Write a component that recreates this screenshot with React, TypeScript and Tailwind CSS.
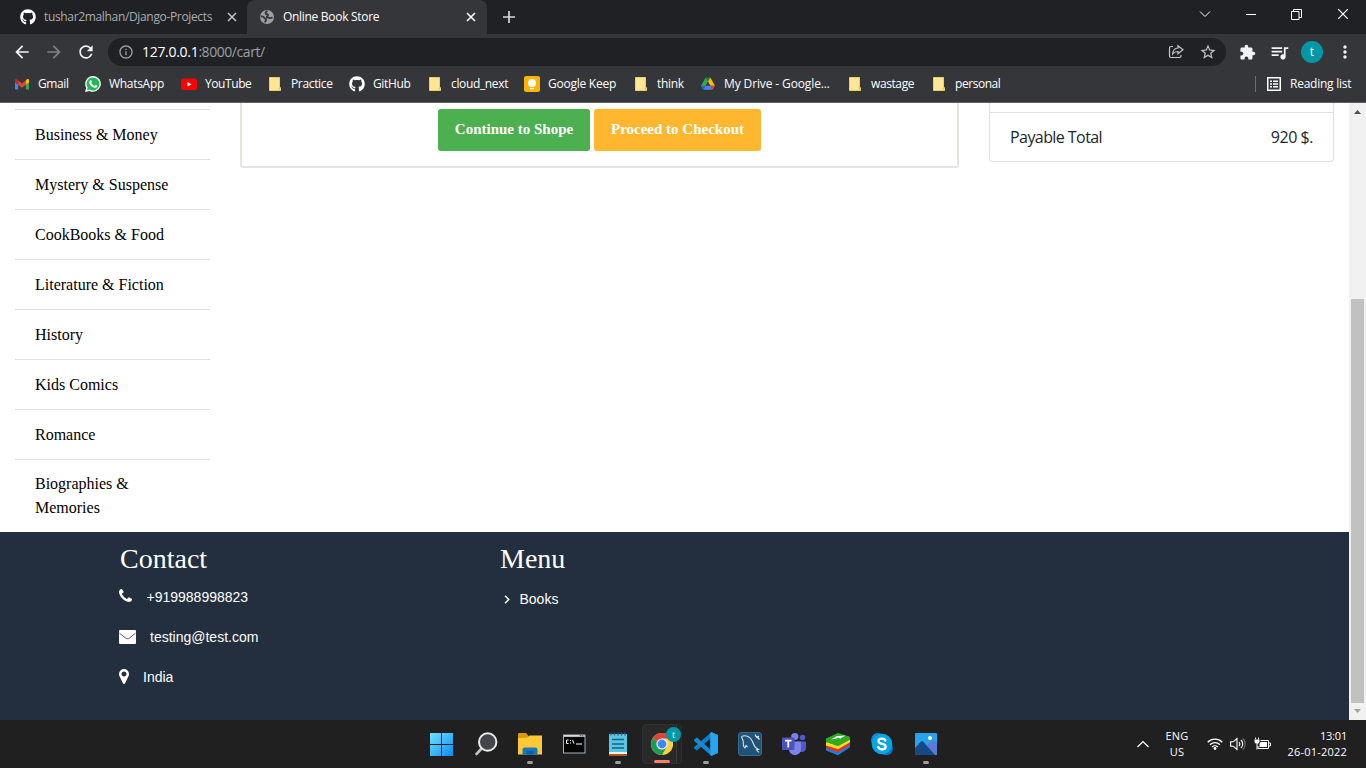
import type { ReactNode } from "react";
import { FaGithub } from "react-icons/fa";
import {
  MdArrowBack,
  MdArrowForward,
  MdExtension,
  MdInfoOutline,
  MdMoreVert,
  MdQueueMusic,
  MdRefresh,
  MdStarBorder,
} from "react-icons/md";

function Cross({ className }: { className: string }) {
  return (
    <svg className={className} viewBox="0 0 10 10" fill="none" stroke="currentColor">
      <path d="M1 1l8 8M9 1l-8 8" />
    </svg>
  );
}

function GlobeIcon() {
  return (
    <svg className="size-4" viewBox="0 0 16 16">
      <circle cx="8" cy="8" r="7" fill="#9aa0a6" />
      <path
        d="M8.500 2.200c-1.500.5-2.500 1.600-1.700 2.500.8.700 1.900.2 2.300 1.200.3 1-1.400 1-1.300 2 .1.900 1.600.5 2.400.9.900.5 2.200.2 3.300-.5M1.800 7.500c1.700-.3 3 .3 3.500 1.300.4.900 1.900.7 1.900 1.900 0 1-1.100 1.500-1.300 2.700"
        fill="none"
        stroke="#35363a"
        strokeWidth="1.900"
      />
    </svg>
  );
}

function TabStrip() {
  return (
    <div className="flex h-[34px] bg-[#202124] text-xs tracking-[-0.3px]">
      <div className="flex w-[247px] items-center pl-5">
        <FaGithub className="size-4 shrink-0 text-white" />
        <span className="ml-2 w-[176px] whitespace-nowrap tracking-[-0.34px] text-[#a9adb2]">
          tushar2malhan/Django-Projects
        </span>
        <Cross className="ml-[7px] size-[10px] stroke-[1.5] text-[#c4c7ca]" />
      </div>
      <div className="flex w-60 items-center rounded-t-lg bg-[#35363a] pl-3 text-white">
        <GlobeIcon />
        <span className="ml-2 w-[183px] whitespace-nowrap">Online Book Store</span>
        <Cross className="size-[10px] stroke-[1.6] text-white" />
      </div>
      <div className="flex flex-1 items-center pl-4 text-[#d5d6d8]">
        <svg className="size-3" viewBox="0 0 12 12" fill="none" stroke="currentColor" strokeWidth="1.7">
          <path d="M6 0v12M0 6h12" />
        </svg>
      </div>
      <div className="flex w-[167px] items-start pt-[8px] text-white">
        <svg className="mt-[2px] h-[8px] w-3" viewBox="0 0 12 8" fill="none" stroke="currentColor">
          <path d="M1 1.5l5 5 5-5" />
        </svg>
        <svg className="ml-[35px] h-3 w-[10px]" viewBox="0 0 10 12" fill="none" stroke="currentColor">
          <path d="M0 6.5h10" />
        </svg>
        <svg className="ml-[35px] mt-px size-[11px]" viewBox="0 0 11 11" fill="none" stroke="currentColor">
          <path d="M.5 2.5h7.5v8H.5zM2.5 2.5v-2h8v8h-2.5" />
        </svg>
        <Cross className="ml-[35px] size-3" />
      </div>
    </div>
  );
}

function Toolbar() {
  return (
    <div className="flex h-9 items-center bg-[#35363a] pl-3 text-[#f1f3f4]">
      <MdArrowBack className="size-5" />
      <MdArrowForward className="ml-3 size-5 text-[#7f8185]" />
      <MdRefresh className="ml-3 size-5" />
      <div className="ml-3 flex h-7 w-[1118px] items-center rounded-full bg-[#202124] pl-[10px]">
        <MdInfoOutline className="size-4 text-[#9aa0a6]" />
        <span className="ml-2 flex-1 text-sm tracking-[-0.44px] text-[#9aa0a6]">
          <span className="tracking-[-0.3px] text-white">127.0.0.1</span>:8000/cart/
        </span>
        <svg className="mr-[15px] size-4 text-[#c4c7ca]" viewBox="0 0 16 16" fill="none" stroke="currentColor" strokeWidth="1.2">
          <path d="M5 2.500H3A1.500 1.500 0 0 0 1.500 4v8A1.500 1.500 0 0 0 3 13.500h8.500A1.500 1.500 0 0 0 13 12v-1" />
          <path d="M10 1.800l5 4-5 4V7.500C7.500 7.500 6 8.200 4.600 10c.2-3.200 2-5.700 5.400-6z" />
        </svg>
        <MdStarBorder className="mr-[9px] size-[18px] text-[#c4c7ca]" />
      </div>
      <MdExtension className="ml-[13px] size-[17px]" />
      <MdQueueMusic className="ml-[13px] size-[21px]" />
      <span className="ml-[11px] flex size-[22px] items-center justify-center rounded-full bg-[#0097a7] text-xs text-white">
        t
      </span>
      <MdMoreVert className="ml-[12px] size-5" />
    </div>
  );
}

function Folder() {
  return (
    <svg className="size-4" viewBox="0 0 16 16">
      <path d="M2.5 1.5H12.500v9.500l1 .8v2.700h-11z" fill="#ffe694" stroke="#f0cd60" />
      <path d="M11.800 14V11.500h1.500V14z" fill="#f4cb49" />
    </svg>
  );
}

function GmailIcon() {
  return (
    <svg className="size-4" viewBox="0 0 16 16">
      <path d="M1 4.500V13.500h3.200V7z" fill="#4285f4" />
      <path d="M15 4.500V13.500h-3.200V7z" fill="#34a853" />
      <path d="M4.200 4.500v4.300L8 11.700l3.800-2.900V4.500L8 7.400z" fill="#ea4335" />
      <path d="M1 4.200C1 2.700 2.700 2.200 4.200 4.500v4.300L1 6.400z" fill="#c5221f" />
      <path d="M15 4.200c0-1.500-1.700-2-3.200.3v4.300L15 6.400z" fill="#fbbc04" />
    </svg>
  );
}

function WhatsAppIcon() {
  return (
    <svg className="size-4" viewBox="0 0 16 16">
      <path d="M8.100 0a7.900 7.900 0 1 1-3.800 14.900L0 16l1.200-4.200A7.900 7.900 0 0 1 8.100 0z" fill="#fff" />
      <path d="M8.100 1.400a6.500 6.500 0 1 1-3.400 12.100L2 14.200l.7-2.600A6.500 6.500 0 0 1 8.100 1.400z" fill="#1fb855" />
      <path
        d="M5.400 4.300c.8-.4 1 0 1.500 1.300.2.600-.7 1-.5 1.300.8 1.500 1.700 2.300 3.200 2.900.4.100.8-1 1.200-.9 1.600.7 1.700.7 1.500 1.400-.3 1.200-1.500 1.700-2.700 1.400-2.500-.6-4.300-2.200-5.200-4.300-.5-1.400.1-2.600 1-3.100z"
        fill="#fff"
      />
    </svg>
  );
}

function YouTubeIcon() {
  return (
    <svg className="size-4" viewBox="0 0 16 16">
      <rect y="2.500" width="16" height="11.500" rx="2.500" fill="#f00" />
      <path d="M6.500 5.900v4.600l4-2.300z" fill="#fff" />
    </svg>
  );
}

function KeepIcon() {
  return (
    <svg className="size-4" viewBox="0 0 16 16">
      <rect width="16" height="16" rx="2" fill="#fbb400" />
      <circle cx="8" cy="7" r="4" fill="#fff" />
      <path d="M6 9h4v2H6zM6 12h4v1.300H6z" fill="#fff" />
    </svg>
  );
}

function DriveIcon() {
  return (
    <svg className="size-4" viewBox="0 0 16 16">
      <path d="M5.700 1.500h4.600L8 5.500z" fill="#188038" />
      <path d="M5.700 1.500L1 9.700l2.300 4L8 5.500z" fill="#34a853" />
      <path d="M10.300 1.500L15 9.700h-4.600L8 5.500z" fill="#fbbc04" />
      <path d="M5.600 9.700h4.800l2.300 4H3.300z" fill="#4285f4" />
      <path d="M10.400 9.700H15l-2.300 4z" fill="#ea4335" />
      <path d="M1 9.700h4.600l-2.300 4z" fill="#1967d2" />
    </svg>
  );
}

function ReadingListIcon() {
  return (
    <svg className="size-[14px] shrink-0" viewBox="0 0 14 14" fill="none" stroke="currentColor">
      <rect x=".75" y=".75" width="12.500" height="12.500" strokeWidth="1.500" />
      <path d="M3 4.300h2M6 4.300h5M3 7h2M6 7h5M3 9.700h2M6 9.700h5" strokeWidth="1.500" />
    </svg>
  );
}

const bookmarks: { label: string; icon: ReactNode; box: string }[] = [
  { label: "Gmail", icon: <GmailIcon />, box: "w-[71px] tracking-[-0.4px]" },
  { label: "WhatsApp", icon: <WhatsAppIcon />, box: "w-[96px] tracking-[-0.3px]" },
  { label: "YouTube", icon: <YouTubeIcon />, box: "w-[86px] tracking-[-0.42px]" },
  { label: "Practice", icon: <Folder />, box: "w-[82px] tracking-[-0.35px]" },
  { label: "GitHub", icon: <FaGithub className="size-4" />, box: "w-[78px] tracking-[-0.35px]" },
  { label: "cloud_next", icon: <Folder />, box: "w-[97px] tracking-[-0.35px]" },
  { label: "Google Keep", icon: <KeepIcon />, box: "w-[109px] tracking-[-0.25px]" },
  { label: "think", icon: <Folder />, box: "w-[67px] tracking-[-0.3px]" },
  { label: "My Drive - Google...", icon: <DriveIcon />, box: "w-[147px] tracking-[-0.12px]" },
  { label: "wastage", icon: <Folder />, box: "w-[84px] tracking-[-0.4px]" },
  { label: "personal", icon: <Folder />, box: "w-[84px] tracking-[-0.45px]" },
];

function BookmarksBar() {
  return (
    <div className="flex h-[33px] items-center border-b border-[#5f6064] bg-[#35363a] pb-[4px] pl-[14px] text-xs text-white">
      {bookmarks.map((b) => (
        <div key={b.label} className={`flex shrink-0 items-center gap-2 whitespace-nowrap ${b.box}`}>
          {b.icon}
          {b.label}
        </div>
      ))}
      <div className="ml-auto flex h-4 w-[111px] items-center border-l border-[#6b6c70] pl-[11px]">
        <ReadingListIcon />
        <span className="ml-[9px] whitespace-nowrap tracking-[-0.25px]">Reading list</span>
      </div>
    </div>
  );
}

const categories = [
  "Business & Money",
  "Mystery & Suspense",
  "CookBooks & Food",
  "Literature & Fiction",
  "History",
  "Kids Comics",
  "Romance",
];

function CartPage() {
  return (
    <main className="flex h-[429px] pl-[15px]">
      <ul className="w-[195px] pt-[6px] font-['Liberation_Serif',serif] text-base text-black">
        {categories.map((c) => (
          <li key={c} className="flex h-[50px] items-center border-t border-[#dfdfdf] pl-5">
            {c}
          </li>
        ))}
        <li className="border-t border-[#dfdfdf] py-3 pr-12 pl-5">Biographies &amp; Memories</li>
      </ul>
      <section className="ml-[30px] flex h-[65px] w-[719px] justify-center gap-1 rounded-b-[3px] border-2 border-t-0 border-[#e5e5df] pt-[6px] font-['Liberation_Serif',serif] text-[15px] font-bold text-white">
        <button className="h-[42px] w-[152px] rounded-[3px] bg-[#4caf50] pb-[2px]">Continue to Shope</button>
        <button className="h-[42px] w-[167px] rounded-[3px] bg-[#ffb72f] pb-[2px]">Proceed to Checkout</button>
      </section>
      <section className="ml-[30px] h-[59px] w-[345px] rounded-b border border-t-0 border-[#dfdfdf] pt-[9px] text-[#212529]">
        <div className="flex h-[49px] items-center justify-between border-t border-[#dfdfdf] px-5 text-base">
          <span className="tracking-[-0.57px]">Payable Total</span>
          <span className="tracking-[-0.45px]">920 $.</span>
        </div>
      </section>
    </main>
  );
}

function Footer() {
  return (
    <footer className="flex h-[188px] bg-[#232f3e] pt-[10px] pl-[119px] font-['Liberation_Sans',sans-serif] text-sm text-white">
      <div className="w-[380px]">
        <h2 className="pl-px font-['Liberation_Serif',serif] text-[28px] leading-[34px]">Contact</h2>
        <div className="flex h-10 items-center">
          <svg className="mb-px h-[13px] w-[13px]" viewBox="0 128 1408 1408" fill="currentColor">
            <path d="M1408 1240q0 27-10 70.5t-21 68.5q-21 50-122 106-94 51-186 51-27 0-53-3.5t-57.5-12.5-47-14.5-55.5-20.5-49-18q-98-35-175-83-127-79-264-216t-216-264q-48-77-83-175-3-9-18-49t-20.5-55.5-14.5-47-12.5-57.5-3.5-53q0-92 51-186 56-101 106-122 25-11 68.5-21t70.5-10q14 0 21 3 18 6 53 76 11 19 30 54t35 63.5 31 53.5q3 4 17.5 25t21.5 35.5 7 28.5q0 20-28.5 50t-62 55-62 53-28.5 46q0 9 5 22.5t8.5 20.5 14 24 11.5 19q76 137 174 235t235 174q2 1 19 11.5t24 14 20.5 8.5 22.5 5q18 0 46-28.5t53-62 55-62 50-28.5q14 0 28.5 7t35.5 21.5 25 17.5q25 15 53.5 31t63.5 35 54 30q70 35 76 53 3 7 3 21z" />
          </svg>
          <span className="ml-[14.5px] mt-[2px]">+919988998823</span>
        </div>
        <div className="flex h-10 items-center">
          <svg className="mt-px h-[14px] w-[17px]" viewBox="0 0 17 14" fill="none">
            <rect width="17" height="14" rx="1" fill="#fff" />
            <path d="M.5 3.200l5.800 4.600c1.700 1.300 2.700 1.300 4.400 0l5.800-4.600" stroke="#3b4654" strokeWidth=".9" />
          </svg>
          <span className="ml-[14px] mt-[2px]">testing@test.com</span>
        </div>
        <div className="flex h-10 items-center">
          <svg className="h-[15px] w-[10px]" viewBox="0 128 1024 1536" fill="currentColor">
            <path d="M768 640q0-106-75-181t-181-75-181 75-75 181 75 181 181 75 181-75 75-181zm256 0q0 109-33 179l-364 774q-16 33-47.5 52t-67.5 19-67.5-19-46.5-52l-365-774q-33-70-33-179 0-212 150-362t362-150 362 150 150 362z" />
          </svg>
          <span className="ml-[14px] mt-[2px]">India</span>
        </div>
      </div>
      <div>
        <h2 className="pl-px font-['Liberation_Serif',serif] text-[28px] leading-[34px]">Menu</h2>
        <div className="mt-[3px] flex h-10 items-center pl-[5px]">
          <svg className="h-[9px] w-[6px]" viewBox="0 0 6 9" fill="none" stroke="currentColor" strokeWidth="1.5">
            <path d="M1 .8l3.700 3.700L1 8.200" />
          </svg>
          <span className="ml-[9.5px]">Books</span>
        </div>
      </div>
    </footer>
  );
}

function ScrollBar() {
  return (
    <div className="flex w-[17px] flex-col items-center bg-[#f1f1f1] pt-[7px]">
      <svg className="h-1 w-[7px]" viewBox="0 0 7 4">
        <path d="M0 4L3.500 0 7 4z" fill="#505050" />
      </svg>
      <div className="mt-[185px] h-[404px] w-[13px] bg-[#c1c1c1]" />
      <svg className="mt-[6px] h-1 w-[7px]" viewBox="0 0 7 4">
        <path d="M0 0l3.500 4L7 0z" fill="#a3a3a3" />
      </svg>
    </div>
  );
}

function WindowsIcon() {
  return (
    <svg className="size-6" viewBox="0 0 24 24">
      <defs>
        <linearGradient id="win" x1="0" y1="0" x2="1" y2="1">
          <stop offset="0" stopColor="#6fe3ff" />
          <stop offset="1" stopColor="#0a8df0" />
        </linearGradient>
      </defs>
      <path d="M0 1h11v11H0zM12 1h11v11H12zM0 13h11v11H0zM12 13h11v11H12z" fill="url(#win)" />
    </svg>
  );
}

function SearchIcon() {
  return (
    <svg className="size-6" viewBox="0 0 24 24" fill="none">
      <path d="M9 15l-6.500 7" stroke="#bfc2c4" strokeWidth="2.600" strokeLinecap="round" />
      <circle cx="13.700" cy="10" r="8.700" fill="#43464a" stroke="#e9ebec" strokeWidth="2" />
    </svg>
  );
}

function ExplorerIcon() {
  return (
    <svg className="size-6" viewBox="0 0 24 24">
      <path d="M0 2.500C0 1.500.5 1 1.500 1H8l2.500 3v4H0z" fill="#d99a06" />
      <path d="M0 6l9-.2L11.500 3.500H24V22.500H0z" fill="#ffc936" />
      <path d="M4.500 22.500v-5a2 2 0 0 1 2-2h11a2 2 0 0 1 2 2v5z" fill="#1477c6" />
      <path d="M8.500 19h7v3.500h-7z" fill="#0b5ea5" />
    </svg>
  );
}

function TerminalIcon() {
  return (
    <svg className="mr-px size-6" viewBox="0 0 24 24">
      <rect x="1" y="2.500" width="22.500" height="19" fill="#a9b3ba" />
      <rect x="2" y="5" width="20.500" height="15.500" fill="#050505" />
      <path d="M2 3.700h15" stroke="#dfe5e8" />
      <path d="M18 3.700h1M20 3.700h1" stroke="#4c5c75" />
      <path d="M6.500 8H4.500v3.500h2M8 8.500h1M8 11h1M10.500 8l1.500 3.500M14 12h6" stroke="#fff" fill="none" />
    </svg>
  );
}

function NotepadIcon() {
  return (
    <svg className="size-6" viewBox="0 0 24 24">
      <path d="M3 2h18v19H3z" fill="#5cc4e3" />
      <path d="M3 20h18v2H3z" fill="#f2f2f2" />
      <path d="M3 22h18v2H3z" fill="#b35a12" />
      <path d="M5 .5v3M8.500 .5v3M12 .5v3M15.500 .5v3M19 .5v3" stroke="#126a94" strokeWidth="1.300" />
      <path d="M6 7.500h12M6 12h12M6 16h12" stroke="#0e638d" strokeWidth="1.600" />
    </svg>
  );
}

function ChromeIcon() {
  return (
    <svg className="size-6" viewBox="0 0 24 24">
      <circle cx="12" cy="12" r="11.100" fill="#ffd042" />
      <path d="M12 12L2.400 6.500A11.100 11.100 0 0 1 21.600 6.500H12z" fill="#dc4437" />
      <path d="M2.400 6.500A11.100 11.100 0 0 0 12 23.100l4.800-8.400L12 12z" fill="#1a9c57" />
      <circle cx="12" cy="12" r="5.600" fill="#f4f6f8" />
      <circle cx="12" cy="12" r="4.400" fill="#4286f5" />
    </svg>
  );
}

function CodeIcon() {
  return (
    <svg className="size-6" viewBox="0 0 24 24">
      <path d="M17.500 5.500L3 18.500 0 16.500v-1.200L17.500 0z" fill="#0f7fc4" />
      <path d="M17.500 18.500L3 5.500 0 7.500v1.200L17.500 24z" fill="#1689d2" />
      <path d="M17.500 0L24 3v18l-6.500 3-1.300-1V1z" fill="#26a5f2" />
    </svg>
  );
}

function WorkbenchIcon() {
  return (
    <svg className="size-6" viewBox="0 0 24 24" fill="none">
      <rect x=".5" y=".5" width="23" height="23" rx="2.500" fill="#1f5379" stroke="#376b8e" />
      <path
        d="M3.500 4.500C8 2.500 12.500 5 14.500 9.500c1 2.500 1.500 4.500 3 6l3 2-2 .3 2.500 2.700M3.500 4.500l1.500 4c.8 2-.3 3.500.8 6L7 16l1-2.500 1.500 1.500"
        stroke="#d6e3eb"
        strokeWidth="1.100"
      />
      <path d="M17 2.500l1.500 2.500 2.500-.5M19 5l2.500 2.500" stroke="#e8eef2" strokeWidth="1.300" />
    </svg>
  );
}

function TeamsIcon() {
  return (
    <svg className="size-6" viewBox="0 0 24 24">
      <circle cx="20.500" cy="5.500" r="2.800" fill="#5059c9" />
      <path d="M15 9.500h9v6c0 2.800-1.700 4.500-4 4.500h-5z" fill="#5059c9" />
      <circle cx="12.800" cy="4.500" r="3.600" fill="#7b83eb" />
      <path d="M7 9.500h12V17c0 3.500-2.500 6-6 6s-6-2.500-6-6z" fill="#7b83eb" />
      <rect y="5.500" width="12.500" height="12.500" rx="1" fill="#4b53bc" />
      <path d="M3 8.700h6.500M6.250 8.700v6.800" stroke="#fff" strokeWidth="1.800" />
    </svg>
  );
}

function BlueStacksIcon() {
  return (
    <svg className="size-6" viewBox="0 0 24 24">
      <path d="M0 15.500l12-4 12 1v2.800L12 23.200 0 18.500z" fill="#1780e0" />
      <path d="M0 13l12-4 12 1v2.800l-12 7.400L0 16z" fill="#ef2b1d" />
      <path d="M0 10.500l12-4 12 1v2.800l-12 7L0 13.500z" fill="#ffdf25" />
      <path d="M0 6.500L12 1l12 3.800v3L12 14.300 0 10z" fill="#2fab22" />
      <path d="M5 7.500l5.500-3.300 9-.7-5.500 3.200-1-1.200-3.500 1.200z" fill="#fff" />
    </svg>
  );
}

function SkypeIcon() {
  return (
    <svg className="size-6" viewBox="0 0 24 24">
      <circle cx="8" cy="8" r="7" fill="#1687d3" />
      <circle cx="16.200" cy="16.500" r="6.800" fill="#0b71c8" />
      <circle cx="12" cy="12" r="10.300" fill="#08a5e3" />
      <path
        d="M15.300 8.600C15 7.300 13.700 6.700 12 6.700c-2 0-3.500 1-3.500 2.500 0 3.700 7.200 1.700 7.200 5.300 0 1.700-1.600 2.800-3.700 2.800-2 0-3.300-.9-3.800-2.300"
        fill="none"
        stroke="#fff"
        strokeWidth="2.300"
        strokeLinecap="round"
      />
    </svg>
  );
}

function PhotosIcon() {
  return (
    <svg className="size-6" viewBox="0 0 24 24">
      <rect x="1" y="1" width="22" height="22" rx="1" fill="#27a5ec" />
      <path d="M13 13l6.500-5.500L23 11v12h-6z" fill="#5b7ad6" />
      <path d="M1 16l6-6.500q1-1 2 0L21 23H1z" fill="#174984" />
      <circle cx="16" cy="6" r="2" fill="#fff" />
    </svg>
  );
}

const apps: { name: string; icon: ReactNode; running?: boolean; active?: boolean }[] = [
  { name: "start", icon: <WindowsIcon /> },
  { name: "search", icon: <SearchIcon /> },
  { name: "explorer", icon: <ExplorerIcon />, running: true },
  { name: "terminal", icon: <TerminalIcon /> },
  { name: "notepad", icon: <NotepadIcon />, running: true },
  { name: "chrome", icon: <ChromeIcon />, active: true },
  { name: "code", icon: <CodeIcon />, running: true },
  { name: "workbench", icon: <WorkbenchIcon /> },
  { name: "teams", icon: <TeamsIcon /> },
  { name: "bluestacks", icon: <BlueStacksIcon /> },
  { name: "skype", icon: <SkypeIcon /> },
  { name: "photos", icon: <PhotosIcon />, running: true },
];

function Taskbar() {
  return (
    <div className="flex h-12 items-center bg-[#202020] pl-[420px] text-[11px] text-white">
      {apps.map((app) => (
        <div
          key={app.name}
          className={
            app.active
              ? "relative mx-[2px] flex h-10 w-10 items-center justify-center rounded border border-[#2f2f2f] bg-[#292929]"
              : "relative flex h-10 w-11 items-center justify-center"
          }
        >
          {app.active && (
            <span className="absolute top-0 right-0 h-[38px] w-[5px] rounded-r border-l border-[#3b3b3b] bg-[#252525]" />
          )}
          {app.icon}
          {app.active && (
            <>
              <span className="absolute top-[2px] right-0 flex size-[15px] items-center justify-center rounded-full bg-[#0097a7] text-[9px]">
                t
              </span>
              <span className="absolute bottom-0 left-[11px] h-[3px] w-4 rounded-full bg-[#fb8069]" />
            </>
          )}
          {app.running && <span className="absolute bottom-0 h-[3px] w-[6px] rounded-full bg-[#9d9d9d]" />}
        </div>
      ))}
      <svg className="ml-[189px] h-2 w-3" viewBox="0 0 12 8" fill="none" stroke="currentColor" strokeWidth="1.2">
        <path d="M.5 7L6 1.500 11.500 7" />
      </svg>
      <div className="ml-4 w-6 text-center leading-4">
        <div className="tracking-[0.2px]">ENG</div>
        <div className="tracking-[0.2px]">US</div>
      </div>
      <svg className="ml-[18px] h-[14px] w-4" viewBox="0 0 16 14" fill="none" stroke="currentColor" strokeWidth="1.3">
        <path d="M.7 5.200a10.300 10.300 0 0 1 14.600 0M3 7.700a7 7 0 0 1 10 0M5.200 10a4 4 0 0 1 5.600 0" />
        <circle cx="8" cy="11.500" r="1.400" fill="currentColor" stroke="none" />
      </svg>
      <svg className="ml-[7px] h-[14px] w-4" viewBox="0 0 16 14" fill="none" stroke="currentColor" strokeWidth="1.1">
        <path d="M.6 4.800h2.600L7 1.500v11L3.200 9.200H.6zM9 5a3 3 0 0 1 0 4M11 3a5.500 5.500 0 0 1 0 8" />
        <path d="M13 1.500a8 8 0 0 1 0 11" stroke="#707070" />
      </svg>
      <svg className="ml-2 h-[14px] w-[17px]" viewBox="0 0 17 14" fill="none" stroke="currentColor">
        <path d="M6.500 3.500h8v8H4V9M15 6h1.500v3H15M1.500.5v2M4.500.5v2M3 6v6.500" />
        <path d="M.5 2.500h5V5L4.500 6.500h-3L.5 5zM6.500 5h6.500v5H5.500V7z" fill="currentColor" stroke="none" />
      </svg>
      <div className="ml-auto mr-[19px] text-right leading-4">
        <div className="tracking-[-0.2px]">13:01</div>
        <div className="tracking-[0.2px]">26-01-2022</div>
      </div>
    </div>
  );
}

export default function App() {
  return (
    <div className="flex h-[768px] w-[1366px] flex-col overflow-hidden bg-white font-['Open_Sans','Noto_Sans',sans-serif]">
      <TabStrip />
      <Toolbar />
      <BookmarksBar />
      <div className="flex h-[617px]">
        <div className="w-[1349px]">
          <CartPage />
          <Footer />
        </div>
        <ScrollBar />
      </div>
      <Taskbar />
    </div>
  );
}
